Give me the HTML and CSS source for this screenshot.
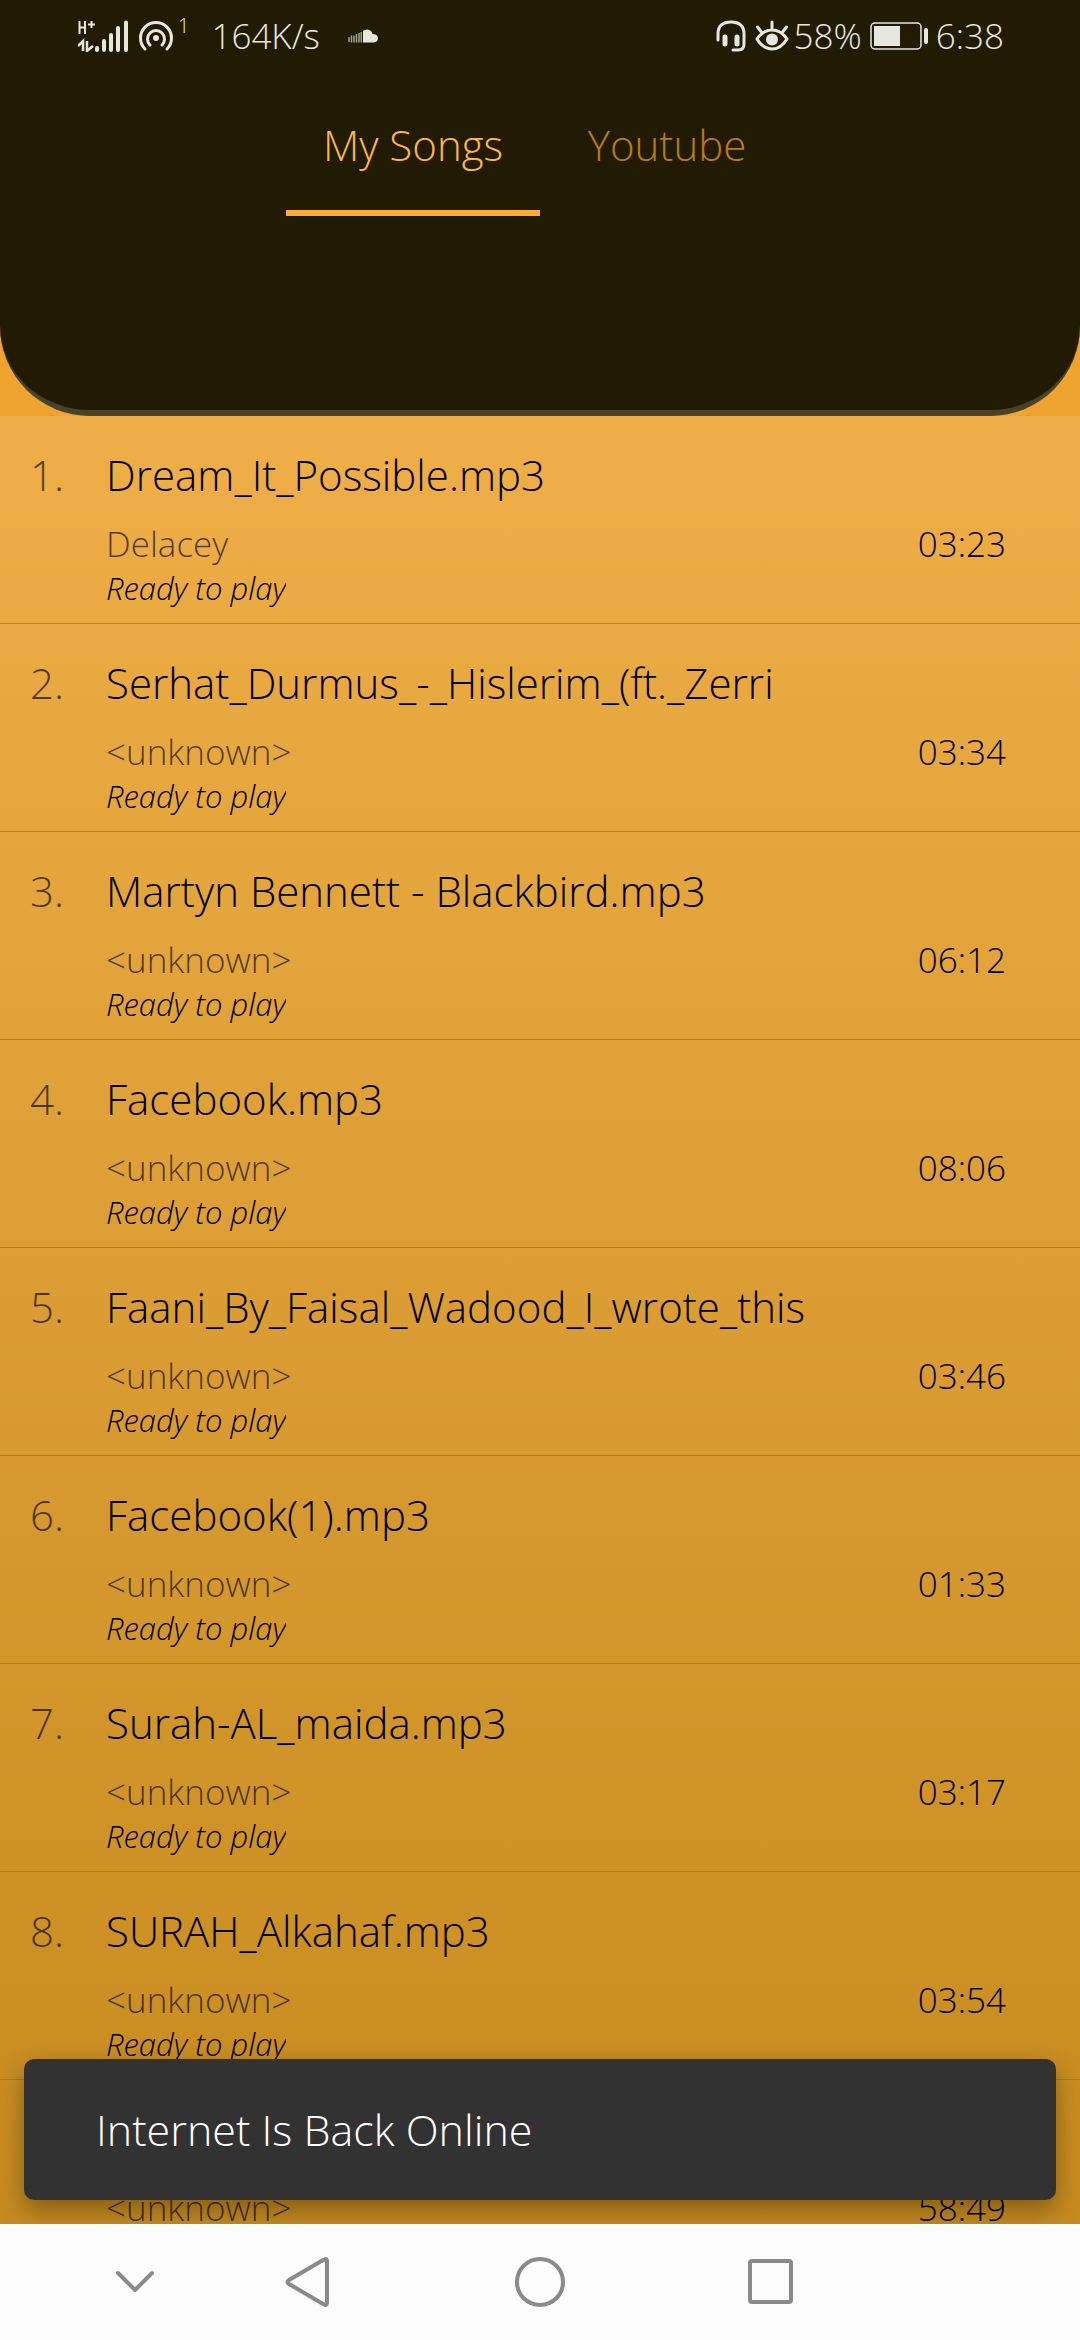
FILE: index.html
```html
<!DOCTYPE html>
<html lang="en">
<head>
<meta charset="utf-8">
<meta name="viewport" content="width=device-width, initial-scale=1">
<title>My Songs</title>
<link rel="stylesheet" href="styles.css">
</head>
<body>
<header class="header">
  <div class="status-bar">
    <div class="status-group">
      <svg class="icon" width="50" height="32" viewBox="0 0 50 32" fill="none" stroke="currentColor" aria-hidden="true">
        <path d="M1.500 1v13M7 1v13M1.500 7.500H7M10 4.500h7M13.500 1v7" stroke-width="2"/>
        <path d="M5 31V21L0 26M9 21v10l6-5" stroke-width="2.500"/>
        <path d="M19 28v2M26 21v9M33 15v15M40 8v22M48 2.500V30" stroke-width="4" stroke-linecap="round"/>
      </svg>
      <svg class="icon hotspot" width="36" height="32" viewBox="0 0 36 32" fill="none" stroke="currentColor" stroke-width="3" stroke-linecap="round" aria-hidden="true">
        <path d="M7 29a15.500 15.500 0 1 1 22 0"/>
        <path d="M12 25a8.500 8.500 0 1 1 12 0"/>
        <circle cx="18" cy="18" r="3" fill="currentColor" stroke="none"/>
      </svg>
      <span class="hotspot-count">1</span>
      <span class="speed">164K/s</span>
      <svg class="icon cloud" width="30" height="14" viewBox="0 0 30 14" fill="currentColor" aria-hidden="true">
        <path d="M15 2q2-2 5-1.500 4 1 4.500 4.500 5 0 5.500 4 0 4-4.500 4.500H15z"/>
        <path d="M1 8v5M3.500 6.500v7M6 6.500v7M8.500 5v8.500M11 4v9.500M13.200 3v10.500" stroke="currentColor" stroke-width="1.500" opacity=".65"/>
      </svg>
    </div>
    <div class="status-group">
      <svg class="icon" width="30" height="32" viewBox="0 0 30 32" fill="none" stroke="currentColor" stroke-linecap="round" aria-hidden="true">
        <path d="M2 20v-6Q2 2 15 2t13 12v10q0 6-6 6h-5" stroke-width="3"/>
        <path d="M9 17v7M21 17v7" stroke-width="5"/>
      </svg>
      <svg class="icon eye" width="34" height="32" viewBox="0 0 34 32" fill="none" stroke="currentColor" stroke-width="3" stroke-linecap="round" aria-hidden="true">
        <path d="M2 19q6-9 15-9t15 9q-6 10-15 10T2 19zM17 2v6M2.500 7l4 5M31.500 7l-4 5"/>
        <circle cx="17" cy="19.500" r="6" fill="currentColor" stroke="none"/>
      </svg>
      <span>58%</span>
      <svg class="icon battery" width="58" height="28" viewBox="0 0 58 28" fill="none" stroke="currentColor" aria-hidden="true">
        <rect x="1" y="1" width="50" height="26" rx="4" stroke-width="1.500"/>
        <rect x="4" y="4" width="26" height="20" fill="currentColor" stroke="none"/>
        <path d="M56 8v12" stroke-width="4" stroke-linecap="round"/>
      </svg>
      <span>6:38</span>
    </div>
  </div>
  <nav class="tabs">
    <button class="tab tab-active" type="button">My Songs</button>
    <button class="tab" type="button">Youtube</button>
  </nav>
</header>

<main class="content">
  <ol class="tracks">
    <li class="track"><span class="number">1.</span><span class="title">Dream_It_Possible.mp3</span><span class="artist">Delacey</span><span class="duration">03:23</span><em class="state">Ready to play</em></li>
    <li class="track"><span class="number">2.</span><span class="title">Serhat_Durmus_-_Hislerim_(ft._Zerri</span><span class="artist">&lt;unknown&gt;</span><span class="duration">03:34</span><em class="state">Ready to play</em></li>
    <li class="track"><span class="number">3.</span><span class="title">Martyn Bennett - Blackbird.mp3</span><span class="artist">&lt;unknown&gt;</span><span class="duration">06:12</span><em class="state">Ready to play</em></li>
    <li class="track"><span class="number">4.</span><span class="title">Facebook.mp3</span><span class="artist">&lt;unknown&gt;</span><span class="duration">08:06</span><em class="state">Ready to play</em></li>
    <li class="track"><span class="number">5.</span><span class="title">Faani_By_Faisal_Wadood_I_wrote_this</span><span class="artist">&lt;unknown&gt;</span><span class="duration">03:46</span><em class="state">Ready to play</em></li>
    <li class="track"><span class="number">6.</span><span class="title">Facebook(1).mp3</span><span class="artist">&lt;unknown&gt;</span><span class="duration">01:33</span><em class="state">Ready to play</em></li>
    <li class="track"><span class="number">7.</span><span class="title">Surah-AL_maida.mp3</span><span class="artist">&lt;unknown&gt;</span><span class="duration">03:17</span><em class="state">Ready to play</em></li>
    <li class="track"><span class="number">8.</span><span class="title">SURAH_Alkahaf.mp3</span><span class="artist">&lt;unknown&gt;</span><span class="duration">03:54</span><em class="state">Ready to play</em></li>
    <li class="track"><span class="artist">&lt;unknown&gt;</span><span class="duration">58:49</span></li>
  </ol>
  <div class="snackbar" role="status">Internet Is Back Online</div>
</main>

<footer class="nav-bar">
  <button class="nav-button" type="button" aria-label="Hide navigation bar">
    <svg width="52" height="52" viewBox="0 0 52 52"><path d="M9 17l17 17 17-17"/></svg>
  </button>
  <button class="nav-button" type="button" aria-label="Back">
    <svg width="52" height="52" viewBox="0 0 52 52"><path d="M45 5v42q0 3-3 1.500L7 28q-3-2 0-4L42 3.500q3-1.500 3 1.500z"/></svg>
  </button>
  <button class="nav-button" type="button" aria-label="Home">
    <svg width="52" height="52" viewBox="0 0 52 52"><circle cx="26" cy="26" r="23"/></svg>
  </button>
  <button class="nav-button" type="button" aria-label="Recent apps">
    <svg width="52" height="52" viewBox="0 0 52 52"><rect x="5" y="5" width="41" height="41" rx="2"/></svg>
  </button>
</footer>
</body>
</html>
```

FILE: styles.css
```css
* {
  box-sizing: border-box;
}

body {
  margin: 0;
  height: 100vh;
  display: flex;
  flex-direction: column;
  overflow: hidden;
  background: #eea42e;
  color: #000;
  font-family: "Open Sans", "Noto Sans", sans-serif;
  font-weight: 300;
  font-size: 35px;
}

button {
  padding: 0;
  border: 0;
  background: none;
  color: inherit;
  font: inherit;
}

.header {
  height: 416px;
  flex: none;
  border-bottom: 6px solid #48422a;
  border-radius: 0 0 90px 90px;
  background: #221b04;
}

.status-bar {
  display: flex;
  justify-content: space-between;
  height: 72px;
  padding: 0 76px 0 78px;
  color: #e8e7df;
  line-height: 74px;
}

.status-group {
  display: flex;
  align-items: center;
}

.icon {
  flex: none;
}

.hotspot {
  margin-left: 10px;
}

.hotspot-count {
  align-self: flex-start;
  padding-left: 4px;
  font-size: 20px;
  line-height: 52px;
}

.speed {
  margin-left: 22px;
}

.cloud {
  margin-left: 28px;
}

.eye {
  margin: 0 5px 0 9px;
}

.battery {
  margin: 0 8px;
}

.tabs {
  display: flex;
  justify-content: center;
  height: 144px;
}

.tab {
  width: 254px;
  padding-top: 6px;
  border-bottom: 6px solid transparent;
  color: #b97c18;
  font-size: 42px;
}

.tab-active {
  border-color: #ffae32;
  color: #ffb647;
}

.content {
  position: relative;
  flex: 1 1 0;
  min-height: 0;
  overflow: hidden;
  background: linear-gradient(#efae47, #c68b1f);
}

.tracks {
  margin: 0;
  padding: 0;
  list-style: none;
}

.track {
  display: grid;
  grid-template-columns: 76px 1fr auto;
  grid-template-rows: 77px 48px 40px;
  padding: 27px 74px 15px 30px;
  border-bottom: 1px solid rgba(170, 100, 0, 0.6);
  line-height: 48px;
  white-space: nowrap;
}

.number,
.title {
  font-size: 42px;
  line-height: 64px;
}

.number,
.artist {
  color: rgba(0, 0, 0, 0.66);
}

.title {
  grid-column: 2 / 4;
}

.artist {
  grid-area: 2 / 2;
}

.duration {
  grid-area: 2 / 3;
}

.state {
  grid-area: 3 / 2;
  justify-self: start;
  overflow: hidden;
  font-size: 31px;
  line-height: 40px;
}

.snackbar {
  position: absolute;
  right: 24px;
  bottom: 24px;
  left: 24px;
  padding: 38px 72px;
  border-radius: 10px;
  background: #323232;
  box-shadow: 0 10px 26px rgba(0, 0, 0, 0.34);
  color: #fff;
  font-size: 43px;
  line-height: 65px;
}

.nav-bar {
  display: grid;
  grid-template-columns: 1fr 2fr 2fr 2fr;
  flex: none;
  height: 116px;
  padding: 0 193px 0 77px;
  background: #fcfcfc;
}

.nav-button {
  display: flex;
  align-items: center;
  justify-content: center;
}

.nav-button svg {
  fill: none;
  stroke: #8a8a8a;
  stroke-width: 4;
  stroke-linecap: round;
  stroke-linejoin: round;
}
```
